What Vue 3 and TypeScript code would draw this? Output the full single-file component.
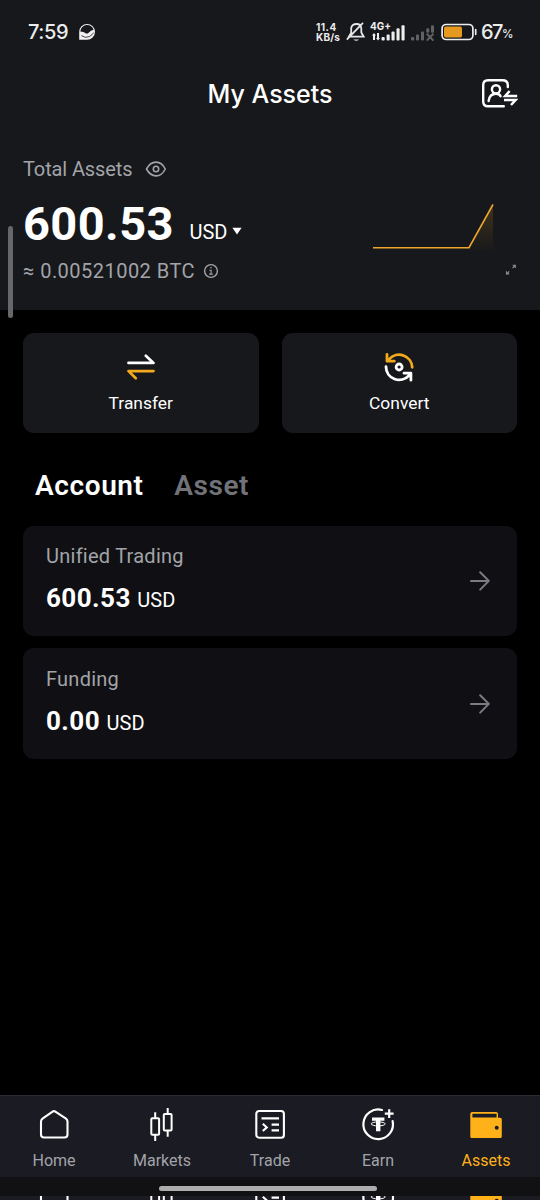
<script setup lang="ts">
interface Account {
  name: string
  amount: string
}

interface NavItem {
  id: string
  label: string
}

const accounts: Account[] = [
  { name: 'Unified Trading', amount: '600.53' },
  { name: 'Funding', amount: '0.00' },
]

const navItems: NavItem[] = [
  { id: 'home', label: 'Home' },
  { id: 'markets', label: 'Markets' },
  { id: 'trade', label: 'Trade' },
  { id: 'earn', label: 'Earn' },
  { id: 'assets', label: 'Assets' },
]
</script>

<template>
  <div class="screen">
    <svg class="defs" width="0" height="0" aria-hidden="true">
      <symbol id="nav-home" viewBox="0 0 36 36">
        <path d="M16.6 4.6Q18 3.6 19.4 4.6L30 11.6Q31.5 12.7 31.5 14.5V27.5Q31.5 30.5 28.5 30.5H8Q5 30.5 5 27.5V14.5Q5 12.7 6.5 11.6Z" fill="none" stroke="#fff" stroke-width="2.1" />
      </symbol>
      <symbol id="nav-markets" viewBox="0 0 36 36">
        <g fill="none" stroke="#fff" stroke-width="2">
          <rect x="7.3" y="11.3" width="7.8" height="16.4" rx="1" />
          <path d="M11.2 5.3V11M11.2 28V34M23.7 1V6.5M23.7 24V29.8" />
          <rect x="19.8" y="7" width="7.8" height="16.6" rx="1" />
        </g>
      </symbol>
      <symbol id="nav-trade" viewBox="0 0 36 36">
        <g fill="none" stroke="#fff" stroke-width="2.1">
          <rect x="4.3" y="4" width="27.6" height="26.7" rx="2.8" />
          <path d="M9.5 11.4H27M19.6 17.6H27M19.6 23.4H27M10.8 16.8L14.8 20.4L10.8 24" />
        </g>
      </symbol>
      <symbol id="nav-earn" viewBox="0 0 36 36">
        <path d="M22 3A14.8 14.8 0 1 0 32.6 14" fill="none" stroke="#fff" stroke-width="2.2" stroke-linecap="round" />
        <path d="M29.2 2.2V11M24.8 6.6H33.6" stroke="#fff" stroke-width="2.2" />
        <path d="M12 10.4H24.4V13.7H20.4V24.2H16V13.7H12Z" fill="#fff" />
        <ellipse cx="18.2" cy="16.9" rx="7" ry="2" fill="none" stroke="#fff" stroke-width="1" />
      </symbol>
      <symbol id="nav-assets" viewBox="0 0 36 36">
        <path d="M4.3 5H28Q30 5 30 7V10.8H32.2Q33.8 10.8 33.8 12.4V29.4Q33.8 31 32.2 31H3.9Q2.3 31 2.3 29.4V7Q2.3 5 4.3 5ZM4.4 6.8V10.6H28.6V6.8Z" fill="#ffb11a" fill-rule="evenodd" />
        <circle cx="28.7" cy="20.7" r="2" fill="#1b1b23" />
      </symbol>
    </svg>

    <header class="top">
      <div class="status">
        <span class="clock">7:59</span>
        <svg class="app-dot" width="18" height="18" viewBox="0 0 18 18">
          <path d="M1.2 16.8V9A7.9 7.9 0 1 1 9 16.8Z" fill="#f1f1f2" />
          <path d="M2.3 8.6A6.8 6.8 0 0 1 15.6 6.8Q12.6 7.2 11 9.6Q9.6 11.2 8.2 10.6Q5.6 8.6 2.3 8.6Z" fill="#17181b" />
          <path d="M3.4 12.6Q7.4 15.6 11.4 13.6Q14.4 12 15.6 9.6" fill="none" stroke="#17181b" stroke-width=".8" />
        </svg>
        <span class="speed"><span class="rate">11.4</span><span>KB/s</span></span>
        <svg class="signals" width="134" height="24" viewBox="0 0 134 24">
          <g fill="none" stroke="#e6e6e7" stroke-width="1.8">
            <path d="M6.2 8Q7 4 11.5 4Q16 4 16.3 8.5V12.5L18.7 16.7H3.9L6.2 12.7ZM1.8 19.6L18 2.8" />
            <path d="M8.4 19.4Q11.2 22 14 19.4Z" fill="#e6e6e7" stroke="none" />
          </g>
          <text x="25" y="10.3" class="net" textLength="21" lengthAdjust="spacingAndGlyphs">4G+</text>
          <g fill="#eee">
            <path d="M28 20V15.5H27L29 13L31 15.5H30V20ZM32 13V18H31L33 20.5L35 18H34V13Z" />
            <rect x="36.5" y="17" width="3.2" height="3.4" rx="1" />
            <rect x="41.6" y="14.4" width="3.1" height="6" rx="1" />
            <rect x="46.5" y="11.6" width="3.1" height="8.8" rx="1" />
            <rect x="51.5" y="8.2" width="3.1" height="12.2" rx="1" />
            <rect x="56.5" y="5.3" width="3.1" height="15.1" rx="1" />
          </g>
          <g fill="#606165">
            <rect x="66" y="17" width="3.2" height="3.4" rx="1" />
            <rect x="71" y="14.4" width="3" height="6" rx="1" />
            <rect x="76" y="11.6" width="3" height="8.8" rx="1" />
            <rect x="81.3" y="8.2" width="3" height="4.6" rx="1" />
            <rect x="86" y="5.3" width="3" height="7.5" rx="1" />
            <path d="M81.8 13.8L88.4 20.6M88.4 13.8L81.8 20.6" stroke="#606165" stroke-width="2" />
          </g>
          <rect x="97.1" y="4.5" width="30.8" height="15" rx="4" fill="none" stroke="#ededed" stroke-width="1.7" />
          <rect x="99" y="6.5" width="18" height="11" rx="1.8" fill="#e5991f" />
          <path d="M130.7 9.7V14.3" stroke="#ededed" stroke-width="1.7" stroke-linecap="round" />
        </svg>
        <span class="charge">67</span><span class="percent">%</span>
      </div>

      <div class="title-row">
        <h1>My Assets</h1>
        <svg class="profile" width="38" height="32" viewBox="0 0 38 32">
          <g fill="none" stroke="#fff" stroke-width="2.4" stroke-linecap="round" stroke-linejoin="round">
            <path d="M23.8 28.3H8Q3.2 28.3 3.2 23.5V7Q3.2 2.2 8 2.2H22.5Q27.7 2.2 27.8 7V9" />
            <circle cx="16" cy="11.3" r="4.1" />
            <path d="M8.6 23Q9.6 15.8 16 15.8Q19.6 15.8 20.6 18.2" />
          </g>
          <path d="M29.6 13L25.2 17.9H37.2M24 22.1H35.6L31 27" fill="none" stroke="#fff" stroke-width="2.5" />
        </svg>
      </div>

      <section class="summary">
        <div class="summary-label">
          <span>Total Assets</span>
          <svg width="22" height="18" viewBox="0 0 22 18">
            <path d="M1.5 9Q5.2 2.1 11 2.1T20.3 9Q16.8 15.9 11 15.9T1.5 9Z" fill="none" stroke="#a2a4a9" stroke-width="1.6" stroke-linejoin="round" />
            <circle cx="11" cy="9" r="2.7" fill="none" stroke="#a2a4a9" stroke-width="1.6" />
          </svg>
        </div>
        <div class="balance-row">
          <strong>600.53</strong>
          <span class="currency">USD</span>
          <svg class="caret" width="10" height="8" viewBox="0 0 10 8"><path d="M.4.7H9.6L5 7.6Z" fill="#fff" /></svg>
          <svg class="chart" width="122" height="54" viewBox="0 0 122 54">
            <defs>
              <linearGradient id="chart-fill" x1="0" y1="0" x2="0" y2="1">
                <stop offset="0" stop-color="#ffb11a" stop-opacity=".18" />
                <stop offset="1" stop-color="#ffb11a" stop-opacity="0" />
              </linearGradient>
            </defs>
            <path d="M97 45.5L121 3V50H97Z" fill="url(#chart-fill)" />
            <path d="M1 45.7H97L121 2.5" fill="none" stroke="#eda52b" stroke-width="1.6" />
          </svg>
        </div>
        <div class="btc-row">
          <span>≈ 0.00521002 BTC</span>
          <svg width="16" height="16" viewBox="0 0 16 16">
            <circle cx="8" cy="8" r="6.4" fill="none" stroke="#a2a4a9" stroke-width="1.4" />
            <path d="M6.4 7.2H8.1V11M6.2 11.1H9.8" fill="none" stroke="#a2a4a9" stroke-width="1.1" />
            <circle cx="8" cy="4.8" r=".8" fill="#a2a4a9" />
          </svg>
          <svg class="expand" width="12" height="12" viewBox="0 0 12 12">
            <path d="M7.6 4L10 1.6M7.7 1.3H10.3V3.9M4.2 7.4L1.8 9.8M1.5 7.3V9.9H4.1" fill="none" stroke="#8f9196" stroke-width="1.1" />
          </svg>
        </div>
      </section>
    </header>

    <main class="body">
      <div class="actions">
        <button type="button" class="action">
          <svg width="32" height="32" viewBox="0 0 32 32" fill="none" stroke-width="2.7" stroke-linecap="round" stroke-linejoin="round">
            <path d="M3.5 12.9H28.5L20.8 5.7" stroke="#fff" />
            <path d="M28.5 21.1H3.5L10.8 28.3" stroke="#f3a91d" />
          </svg>
          <span>Transfer</span>
        </button>
        <button type="button" class="action convert">
          <svg width="32" height="32" viewBox="0 0 32 32" fill="none" stroke-width="2.8" stroke-linecap="round" stroke-linejoin="round">
            <path d="M29.2 17.3A13.2 13.2 0 0 0 6.2 9.1M4 4.3V11.2H11.3" stroke="#f3a91d" />
            <path d="M3 16.7A13.2 13.2 0 0 0 26 25.5M21 23.2H27.9V30.2" stroke="#fff" />
            <circle cx="16.1" cy="17" r="3" stroke="#fff" />
          </svg>
          <span>Convert</span>
        </button>
      </div>

      <nav class="tabs">
        <span class="tab active">Account</span>
        <span class="tab asset">Asset</span>
      </nav>

      <section class="accounts">
        <article v-for="account in accounts" :key="account.name" class="account">
          <div>
            <div class="account-name">{{ account.name }}</div>
            <div class="account-amount"><b>{{ account.amount }}</b><span>USD</span></div>
          </div>
          <svg width="22" height="22" viewBox="0 0 22 22">
            <path d="M2 11.9H19.5M11.2 3.2L19.8 11.9L11.2 20.6" fill="none" stroke="#7b7c81" stroke-width="2" stroke-linecap="round" stroke-linejoin="round" />
          </svg>
        </article>
      </section>
    </main>

    <footer class="bottom">
      <nav class="nav">
        <a v-for="item in navItems" :key="item.id" class="nav-item" :class="item.id">
          <svg width="36" height="36"><use :href="`#nav-${item.id}`" /></svg>
          <span>{{ item.label }}</span>
        </a>
      </nav>
      <div class="gesture"><i></i></div>
      <div class="nav-slice">
        <span v-for="item in navItems" :key="item.id">
          <svg width="36" height="36"><use :href="`#nav-${item.id}`" /></svg>
        </span>
      </div>
    </footer>

    <div class="side-handle"></div>
  </div>
</template>

<style>
html,
body {
  background: #000;
}
</style>

<style scoped>
.screen {
  position: relative;
  display: flex;
  flex-direction: column;
  width: 540px;
  height: 1200px;
  overflow: hidden;
  background: #000;
  color: #fff;
  font-family: Roboto, "Liberation Sans", sans-serif;
}
.screen * {
  box-sizing: border-box;
}
svg {
  display: block;
  flex: none;
}
.defs {
  position: absolute;
}
.top {
  flex: none;
  height: 309.5px;
  background: #17181b;
}
.status {
  display: flex;
  align-items: center;
  height: 63px;
  padding-left: 28px;
  font-family: Inter, sans-serif;
  color: #ececed;
}
.clock {
  width: 50px;
  font-size: 20px;
  font-weight: 500;
  letter-spacing: -0.4px;
}
.speed {
  display: flex;
  flex-direction: column;
  width: 25px;
  margin-left: 220px;
  margin-right: 4px;
  font-size: 10px;
  font-weight: 700;
  line-height: 10px;
  letter-spacing: 0.2px;
}
.rate {
  letter-spacing: 0.5px;
}
.net {
  font-size: 11px;
  font-weight: 700;
  fill: #eee;
}
.charge {
  margin-left: 2px;
  width: 21px;
  font-size: 20px;
  font-weight: 500;
  letter-spacing: -1.5px;
}
.percent {
  padding-top: 4px;
  font-size: 11.5px;
  font-weight: 500;
}
.title-row {
  display: grid;
  grid-template-columns: 60px 1fr 60px;
  align-items: center;
  height: 61px;
}
h1 {
  grid-column: 2;
  margin: 0;
  text-align: center;
  font-family: Inter, sans-serif;
  font-size: 25px;
  font-weight: 500;
}
.profile {
  justify-self: start;
}
.summary {
  padding: 32px 23px 0;
}
.summary-label {
  display: flex;
  align-items: center;
  gap: 13px;
  height: 26px;
  font-size: 20px;
  letter-spacing: -0.12px;
  color: #a2a4a9;
}
.balance-row {
  display: flex;
  align-items: center;
  height: 80px;
}
.balance-row strong {
  width: 166.5px;
  padding-top: 3px;
  font-size: 47px;
  font-weight: 700;
  letter-spacing: 0.4px;
}
.currency {
  padding-top: 19px;
  font-size: 20px;
}
.caret {
  margin: 17px 0 0 5px;
}
.chart {
  margin: 14px 23px 0 auto;
}
.btc-row {
  display: flex;
  align-items: center;
  height: 18px;
  font-size: 20px;
  color: #a2a4a9;
}
.btc-row span {
  letter-spacing: 0.47px;
}
.btc-row svg {
  margin-left: 7.5px;
}
.btc-row .expand {
  margin-left: auto;
  margin-bottom: 2px;
}
.body {
  display: flex;
  flex-direction: column;
  padding: 23.5px 23px 0;
}
.actions {
  display: grid;
  grid-template-columns: 1fr 1fr;
  gap: 23px;
}
.action {
  display: flex;
  flex-direction: column;
  align-items: center;
  height: 100px;
  padding: 17px 0 0;
  border: 0;
  border-radius: 11px;
  background: #17181b;
  color: #fff;
  font: 17.4px/22px Roboto, sans-serif;
}
.action span {
  margin-top: 10px;
}
.tabs {
  display: flex;
  align-items: center;
  height: 92.5px;
  padding: 12px 0 0 12px;
  gap: 30.5px;
}
.tab {
  font-size: 28px;
  font-weight: 600;
  letter-spacing: 0.6px;
}
.active {
  color: #fff;
}
.asset {
  color: #717379;
}
.accounts {
  display: flex;
  flex-direction: column;
  gap: 12px;
}
.account {
  display: flex;
  align-items: center;
  justify-content: space-between;
  height: 110.5px;
  padding: 0 26px 1.5px 23px;
  border-radius: 11px;
  background: #101014;
}
.account-name {
  height: 26px;
  margin-bottom: 12px;
  font-size: 20px;
  line-height: 26px;
  letter-spacing: 0.25px;
  color: #a2a4a9;
}
.account-amount {
  display: flex;
  align-items: baseline;
  gap: 6.5px;
  line-height: 34px;
}
.account-amount b {
  font-size: 26px;
  font-weight: 700;
  letter-spacing: 0.45px;
}
.account-amount span {
  font-size: 20px;
}
.bottom {
  display: flex;
  flex-direction: column;
  height: 105px;
  margin-top: auto;
  background: #111114;
}
.nav {
  display: grid;
  grid-template-columns: repeat(5, 1fr);
  height: 82px;
  border-top: 1px solid #2c2c34;
  background: #1b1b23;
}
.nav-item {
  display: flex;
  flex-direction: column;
  align-items: center;
  padding-top: 11px;
  font-size: 16px;
  line-height: 20px;
  color: #a2a4a9;
}
.nav-item span {
  margin-top: 8px;
}
.nav-item.assets {
  color: #ffb11a;
}
.gesture {
  flex: none;
  height: 19px;
  padding: 9px 0 0 159px;
}
.gesture i {
  display: block;
  width: 218px;
  height: 5px;
  border-radius: 3px;
  background: #adadad;
}
.nav-slice {
  display: grid;
  grid-template-columns: repeat(5, 1fr);
  justify-items: center;
  height: 4px;
  overflow: hidden;
  background: #1b1b23;
}
.nav-slice svg {
  margin-top: -16px;
}
.side-handle {
  position: absolute;
  left: 8px;
  top: 226px;
  width: 5px;
  height: 92px;
  border-radius: 3px;
  background: #66676a;
}
</style>
